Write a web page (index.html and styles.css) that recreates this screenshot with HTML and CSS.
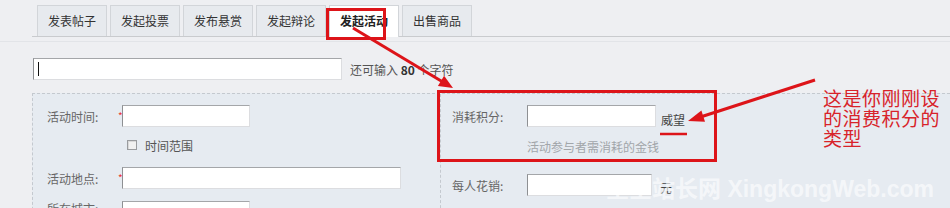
FILE: index.html
```html
<!DOCTYPE html>
<html lang="zh-CN">
<head>
<meta charset="utf-8">
<title>发起活动</title>
<link rel="stylesheet" href="styles.css">
</head>
<body>
<div class="page">
  <div class="tabs">
    <span class="tab">发表帖子</span>
    <span class="tab">发起投票</span>
    <span class="tab">发布悬赏</span>
    <span class="tab">发起辩论</span>
    <span class="tab active">发起活动</span>
    <span class="tab">出售商品</span>
  </div>
  <div class="subline"></div>

  <div class="title-row">
    <div class="field title-field"><span class="caret"></span></div>
    <span class="count">还可输入 <b>80</b> 个字符</span>
  </div>

  <div class="panel">
    <div class="col col-left">
      <div class="row">
        <span class="label">活动时间:</span><span class="req">*</span>
        <div class="field w-short"></div>
      </div>
      <div class="row check-row">
        <span class="checkbox"></span><span class="check-label">时间范围</span>
      </div>
      <div class="row row-place">
        <span class="label">活动地点:</span><span class="req">*</span>
        <div class="field w-long"></div>
      </div>
      <div class="row row-city">
        <span class="label">所在城市:</span><span class="req"></span>
        <div class="field w-short"></div>
      </div>
    </div>
    <div class="col col-right">
      <div class="row">
        <span class="label label-r">消耗积分:</span>
        <div class="field w-credit"></div>
        <span class="unit">威望</span>
      </div>
      <div class="hint">活动参与者需消耗的金钱</div>
      <div class="row row-cost">
        <span class="label label-r">每人花销:</span>
        <div class="field w-cost"></div>
        <span class="unit">元</span>
      </div>
    </div>
  </div>

  <div class="watermark">星空站长网 XingkongWeb.com</div>

  <svg class="marks" width="950" height="208" viewBox="0 0 950 208">
    <rect x="327.5" y="9.5" width="57" height="29" fill="none" stroke="#dd1419" stroke-width="3"/>
    <line x1="353" y1="28" x2="442" y2="81.5" stroke="#dd1419" stroke-width="3"/>
    <polygon points="453,88 437.9,85.9 444.1,75.7" fill="#dd1419"/>
    <rect x="438.5" y="91.5" width="277" height="69" fill="none" stroke="#dd1419" stroke-width="3"/>
    <line x1="660" y1="134" x2="687" y2="134" stroke="#dd1419" stroke-width="2.5"/>
    <line x1="815" y1="80" x2="702" y2="116.5" stroke="#dd1419" stroke-width="3"/>
    <polygon points="688,121 705,121.8 701.4,110.4" fill="#dd1419"/>
  </svg>

  <div class="note">这是你刚刚设<br>的消费积分的<br>类型</div>
</div>
</body>
</html>
```

FILE: styles.css
```css
html, body {
  margin: 0;
  padding: 0;
  background: #eeeff2;
  overflow: hidden;
}

.page {
  position: relative;
  width: 950px;
  height: 208px;
  overflow: hidden;
  font-family: "Noto Sans CJK SC", "Liberation Sans", sans-serif;
  font-size: 12px;
  color: #333;
}

/* Tabs */
.tabs {
  display: flex;
  align-items: flex-end;
  gap: 3px;
  margin-left: 32px;
  padding-left: 5px;
  padding-top: 5px;
  height: 31px;
  border-bottom: 1px solid #c9cbce;
}

.tab {
  box-sizing: border-box;
  height: 31px;
  line-height: 30px;
  padding: 0 10px;
  border: 1px solid #d2d5d9;
  border-bottom: none;
  background: #e7eaee;
  color: #333;
  white-space: nowrap;
}

.tab.active {
  height: 32px;
  margin-bottom: -1px;
  background: #fff;
  font-weight: bold;
  color: #222;
}

.subline {
  margin-top: 4px;
  border-top: 1px solid #e2e4e8;
}

/* Title row */
.title-row {
  display: flex;
  align-items: center;
  margin-top: 16px;
  margin-left: 33px;
  height: 22px;
}

.field {
  box-sizing: border-box;
  height: 22px;
  background: #fff;
  border: 1px solid;
  border-color: #a4a6a9 #dcdde0 #dcdde0 #8e9093;
}

.title-field {
  width: 309px;
  display: flex;
  align-items: center;
  padding-left: 4px;
}

.caret {
  display: block;
  width: 1px;
  height: 14px;
  background: #111;
}

.count {
  margin-left: 8px;
  color: #555;
}

.count b {
  color: #333;
}

/* Panel */
.panel {
  display: grid;
  grid-template-columns: 407px 1fr;
  margin-top: 13px;
  margin-left: 32px;
  border-top: 1px dashed #c4c9cf;
  border-left: 1px dashed #c4c9cf;
  background: #e6ebf1;
  height: 200px;
}

.col-left {
  padding: 11px 0 0 14px;
}

.col-right {
  border-left: 1px dashed #c4c9cf;
  padding: 11px 0 0 11px;
}

.row {
  display: flex;
  align-items: center;
  height: 22px;
}

.label {
  width: 71px;
  color: #666;
}

.label-r {
  width: 75px;
}

.req {
  width: 4px;
  color: #e33;
  font-size: 10px;
  align-self: flex-start;
  line-height: 12px;
  margin-top: 5px;
}

.w-short { width: 128px; }
.w-long { width: 279px; }
.w-credit { width: 129px; }
.w-cost { width: 125px; }

.check-row {
  height: 12px;
  margin-top: 12px;
  padding-left: 80px;
}

.checkbox {
  box-sizing: border-box;
  width: 10px;
  height: 10px;
  border: 1px solid #9a9c9f;
  background: #f1f1f1;
  box-shadow: inset 1px 1px 0 #d9d9d9;
}

.check-label {
  margin-left: 8px;
  color: #555;
}

.row-place {
  margin-top: 16px;
}

.row-city {
  margin-top: 12px;
}

.row-city .label {
  align-self: flex-start;
  line-height: 14px;
  margin-top: 1px;
}

.unit {
  align-self: flex-end;
  margin-left: 5px;
  line-height: 14px;
  color: #444;
}

.hint {
  margin-top: 12px;
  margin-left: 75px;
  line-height: 16px;
  color: #a2a6aa;
}

.row-cost {
  margin-top: 19px;
}

.row-cost .unit {
  margin-left: 8px;
  margin-bottom: 1px;
}

/* Overlays */
.marks {
  position: absolute;
  left: 0;
  top: 0;
  pointer-events: none;
}

.note {
  position: absolute;
  left: 823px;
  top: 88px;
  font-size: 19px;
  line-height: 20px;
  letter-spacing: 0.5px;
  color: #d8232a;
}

.watermark {
  position: absolute;
  left: 606px;
  top: 170px;
  font-family: "Liberation Sans", "Noto Sans CJK SC", sans-serif;
  font-size: 23px;
  font-weight: bold;
  color: rgba(255, 255, 255, 0.6);
  white-space: nowrap;
}
```
